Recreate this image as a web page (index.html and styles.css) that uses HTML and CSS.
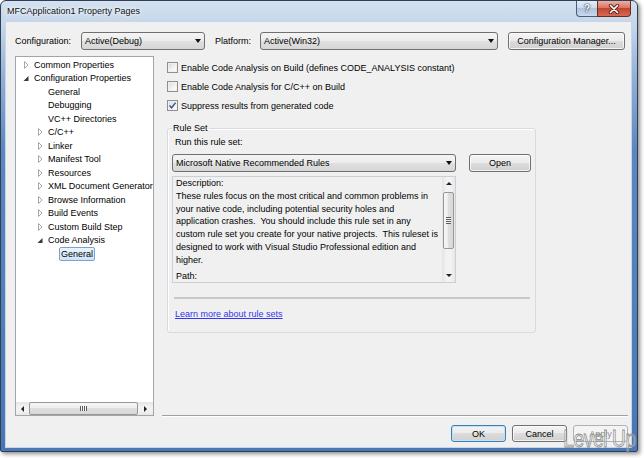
FILE: index.html
```html
<!DOCTYPE html>
<html lang="en">

<head>
    <meta charset="UTF-8">
    <title>MFCApplication1 Property Pages</title>
    <link rel="stylesheet" href="styles.css">
</head>

<body>
    <div class="window">
        <div class="titlebar">
            <span class="title">MFCApplication1 Property Pages</span>
            <div class="caption-buttons">
                <span class="cap-btn cap-help">?</span>
                <span class="cap-btn cap-close">
                    <svg width="12" height="10" viewBox="0 0 12 10">
                        <path d="M2.5 1.5 L9.5 8.5 M9.5 1.5 L2.5 8.5" stroke="#5a2118" stroke-width="3.4" stroke-linecap="round" />
                        <path d="M2.5 1.5 L9.5 8.5 M9.5 1.5 L2.5 8.5" stroke="#fff" stroke-width="1.7" stroke-linecap="round" />
                    </svg>
                </span>
            </div>
        </div>

        <div class="client">
            <div class="toolbar">
                <span class="tb-label">Configuration:</span>
                <div class="combo combo-config">Active(Debug)</div>
                <span class="tb-label platform-label">Platform:</span>
                <div class="combo combo-platform">Active(Win32)</div>
                <button class="btn btn-manager">Configuration Manager...</button>
            </div>

            <div class="main">
                <div class="tree">
                    <ul class="tree-items">
                        <li class="node lvl0"><span class="exp"><svg width="6" height="8" viewBox="0 0 6 8"><path d="M1.5 0.5 L5 4 L1.5 7.5 Z" fill="#fff" stroke="#a8a8a8" /></svg></span>Common Properties</li>
                        <li class="node lvl0"><span class="exp"><svg width="6" height="8" viewBox="0 0 6 8"><path d="M5.5 2 V7 H0.5 Z" fill="#3a3a3a" /></svg></span>Configuration Properties</li>
                        <li class="node lvl1"><span class="exp"></span>General</li>
                        <li class="node lvl1"><span class="exp"></span>Debugging</li>
                        <li class="node lvl1"><span class="exp"></span>VC++ Directories</li>
                        <li class="node lvl1"><span class="exp"><svg width="6" height="8" viewBox="0 0 6 8"><path d="M1.5 0.5 L5 4 L1.5 7.5 Z" fill="#fff" stroke="#a8a8a8" /></svg></span>C/C++</li>
                        <li class="node lvl1"><span class="exp"><svg width="6" height="8" viewBox="0 0 6 8"><path d="M1.5 0.5 L5 4 L1.5 7.5 Z" fill="#fff" stroke="#a8a8a8" /></svg></span>Linker</li>
                        <li class="node lvl1"><span class="exp"><svg width="6" height="8" viewBox="0 0 6 8"><path d="M1.5 0.5 L5 4 L1.5 7.5 Z" fill="#fff" stroke="#a8a8a8" /></svg></span>Manifest Tool</li>
                        <li class="node lvl1"><span class="exp"><svg width="6" height="8" viewBox="0 0 6 8"><path d="M1.5 0.5 L5 4 L1.5 7.5 Z" fill="#fff" stroke="#a8a8a8" /></svg></span>Resources</li>
                        <li class="node lvl1"><span class="exp"><svg width="6" height="8" viewBox="0 0 6 8"><path d="M1.5 0.5 L5 4 L1.5 7.5 Z" fill="#fff" stroke="#a8a8a8" /></svg></span>XML Document Generator</li>
                        <li class="node lvl1"><span class="exp"><svg width="6" height="8" viewBox="0 0 6 8"><path d="M1.5 0.5 L5 4 L1.5 7.5 Z" fill="#fff" stroke="#a8a8a8" /></svg></span>Browse Information</li>
                        <li class="node lvl1"><span class="exp"><svg width="6" height="8" viewBox="0 0 6 8"><path d="M1.5 0.5 L5 4 L1.5 7.5 Z" fill="#fff" stroke="#a8a8a8" /></svg></span>Build Events</li>
                        <li class="node lvl1"><span class="exp"><svg width="6" height="8" viewBox="0 0 6 8"><path d="M1.5 0.5 L5 4 L1.5 7.5 Z" fill="#fff" stroke="#a8a8a8" /></svg></span>Custom Build Step</li>
                        <li class="node lvl1"><span class="exp"><svg width="6" height="8" viewBox="0 0 6 8"><path d="M5.5 2 V7 H0.5 Z" fill="#3a3a3a" /></svg></span>Code Analysis</li>
                        <li class="node lvl2"><span class="exp"></span><span class="selected">General</span></li>
                    </ul>
                    <div class="hscroll">
                        <span class="sb-btn"><span class="tri-left"></span></span>
                        <span class="sb-thumb"><span class="grip-v"></span></span>
                        <span class="sb-btn sb-end"><span class="tri-right"></span></span>
                    </div>
                </div>

                <div class="page">
                    <div class="check-row">
                        <span class="checkbox"></span>
                        <span>Enable Code Analysis on Build (defines CODE_ANALYSIS constant)</span>
                    </div>
                    <div class="check-row">
                        <span class="checkbox"></span>
                        <span>Enable Code Analysis for C/C++ on Build</span>
                    </div>
                    <div class="check-row">
                        <span class="checkbox">
                            <svg width="9" height="9" viewBox="0 0 9 9"><path d="M1.5 4.5 L3.6 6.8 L7.6 1.6" fill="none" stroke="#3a5590" stroke-width="1.5" /></svg>
                        </span>
                        <span>Suppress results from generated code</span>
                    </div>

                    <fieldset class="ruleset">
                        <legend>Rule Set</legend>
                        <div class="run-label">Run this rule set:</div>
                        <div class="rule-row">
                            <div class="combo combo-rules">Microsoft Native Recommended Rules</div>
                            <button class="btn btn-open">Open</button>
                        </div>
                        <div class="desc">
                            <div class="desc-text">
                                <div>Description:</div>
                                <div>These rules focus on the most critical and common problems in</div>
                                <div>your native code, including potential security holes and</div>
                                <div>application crashes.&nbsp; You should include this rule set in any</div>
                                <div>custom rule set you create for your native projects.&nbsp; This ruleset is</div>
                                <div>designed to work with Visual Studio Professional edition and</div>
                                <div>higher.</div>
                                <div class="desc-path">Path:</div>
                            </div>
                            <div class="vscroll">
                                <span class="sb-btn-v"><span class="tri-up"></span></span>
                                <span class="sb-thumb-v"><span class="grip-h"></span></span>
                                <span class="sb-btn-v sb-end-v"><span class="tri-down"></span></span>
                            </div>
                        </div>
                        <div class="separator"></div>
                        <a class="link" href="#">Learn more about rule sets</a>
                    </fieldset>
                </div>
            </div>

            <div class="footer">
                <button class="btn btn-default">OK</button>
                <button class="btn">Cancel</button>
                <button class="btn" disabled>Apply</button>
            </div>
        </div>

        <div class="watermark">Level Up</div>
    </div>
</body>

</html>
```

FILE: styles.css
```css
* {
    box-sizing: border-box;
}

body {
    margin: 0;
    width: 644px;
    height: 458px;
    overflow: hidden;
    background: #fff;
    font-family: "Liberation Sans", Arial, sans-serif;
    font-size: 9px;
    color: #000;
}

/* window frame */

.window {
    position: relative;
    width: 638px;
    height: 452px;
    display: flex;
    flex-direction: column;
    padding: 0 6px 4px 5px;
    border: 1px solid #2f3f55;
    border-radius: 6px 6px 2px 2px;
    background: linear-gradient(180deg, #d3e1f0 0, #c3d5ea 26px, #97b4d9 70px, #5b86bf 150px, #4a77b4 100%);
    box-shadow: 2px 2px 4px rgba(0, 0, 0, 0.45);
}

.titlebar {
    height: 21px;
    display: flex;
    justify-content: space-between;
    align-items: flex-start;
}

.title {
    padding: 5px 0 0 1px;
    color: #111;
    text-shadow: 0 0 5px #fff, 0 0 3px #fff;
}

.caption-buttons {
    display: flex;
}

.cap-btn {
    height: 16px;
    display: flex;
    align-items: center;
    justify-content: center;
    border: 1px solid #4c5d76;
    border-top: 0;
}

.cap-help {
    width: 21px;
    border-radius: 0 0 0 4px;
    border-right: 0;
    background: linear-gradient(180deg, #e4ecf6 0, #cbd9ea 50%, #aec3de 50%, #c9d9ee 100%);
    color: #fff;
    font-weight: bold;
    font-size: 10px;
    text-shadow: 0 0 2px #1c2c44, 0 0 1px #1c2c44;
}

.cap-close {
    width: 34px;
    border-color: #6b2a22;
    border-radius: 0 0 4px 0;
    background: linear-gradient(180deg, #eab1a4 0, #d86e5a 50%, #c2452d 50%, #d76a56 100%);
}

/* dialog body */

.client {
    flex: 1;
    display: flex;
    flex-direction: column;
    padding: 10px 3px 0 9px;
    background: #f0f0f0;
    box-shadow: 0 0 0 1px #c7d5e6;
}

.toolbar {
    height: 18px;
    display: flex;
    align-items: center;
}

.tb-label {
    width: 66px;
}

.platform-label {
    width: 45px;
    margin-left: 10px;
}

.combo {
    height: 18px;
    display: flex;
    align-items: center;
    justify-content: space-between;
    padding: 0 3px 0 3px;
    border: 1px solid #707070;
    border-radius: 3px;
    background: linear-gradient(180deg, #f4f4f4 0, #ececec 50%, #e0e0e0 50%, #d6d6d6 100%);
    white-space: nowrap;
}

.combo::after {
    content: "";
    border-left: 3.5px solid transparent;
    border-right: 3.5px solid transparent;
    border-top: 4px solid #111;
}

.combo-config {
    width: 124px;
}

.combo-platform {
    width: 238px;
}

.btn {
    height: 18px;
    padding: 0;
    font: inherit;
    color: #000;
    border: 1px solid #707070;
    border-radius: 3px;
    background: linear-gradient(180deg, #f4f4f4 0, #ebebeb 50%, #dddddd 50%, #d0d0d0 100%);
    box-shadow: inset 0 0 0 1px rgba(255, 255, 255, 0.75);
}

.btn-manager {
    width: 117px;
    margin-left: 10px;
}

.main {
    height: 360px;
    margin-top: 6px;
    display: flex;
    gap: 8px;
}

/* tree */

.tree {
    width: 139px;
    display: flex;
    flex-direction: column;
    border: 1px solid #a0a6ae;
    background: #fff;
}

.tree-items {
    flex: 1;
    margin: 0;
    padding: 1px 0 0;
    list-style: none;
}

.node {
    height: 13.5px;
    display: flex;
    align-items: center;
    white-space: nowrap;
}

.lvl0 {
    padding-left: 6px;
}

.lvl1 {
    padding-left: 20px;
}

.lvl2 {
    padding-left: 34px;
}

.exp {
    width: 12px;
    flex: none;
    display: flex;
    align-items: center;
    padding-left: 1px;
}

.selected {
    margin-left: -3px;
    padding: 0 1px;
    line-height: 12px;
    border: 1px solid #7da2ce;
    border-radius: 2px;
    background: linear-gradient(180deg, #ebf3fd 0, #cfe2f9 100%);
}

.hscroll {
    height: 13px;
    display: flex;
    align-items: stretch;
    background: linear-gradient(180deg, #e4e4e4 0, #f2f2f2 35%, #f2f2f2 70%, #e6e6e6 100%);
}

.sb-btn {
    width: 13px;
    display: flex;
    align-items: center;
    justify-content: center;
}

.sb-end {
    flex: 1;
}

.sb-thumb {
    width: 109px;
    display: flex;
    align-items: center;
    justify-content: center;
    border: 1px solid #979797;
    border-radius: 2px;
    background: linear-gradient(180deg, #f6f6f6 0, #ececec 50%, #dedede 50%, #d8d8d8 100%);
}

.grip-v {
    width: 7px;
    height: 5px;
    background: repeating-linear-gradient(90deg, #5c5c5c 0 1px, #f4f4f4 1px 2px);
}

.tri-left {
    border-top: 3px solid transparent;
    border-bottom: 3px solid transparent;
    border-right: 3px solid #222;
}

.tri-right {
    border-top: 3px solid transparent;
    border-bottom: 3px solid transparent;
    border-left: 3px solid #222;
}

/* property page */

.page {
    flex: 1;
    padding: 2px 0 0 5px;
    border-bottom: 1px solid #a0a0a0;
    box-shadow: 0 1px 0 #fff;
}

.check-row {
    height: 19px;
    display: flex;
    align-items: center;
    gap: 3px;
}

.checkbox {
    width: 11px;
    height: 11px;
    display: flex;
    align-items: center;
    justify-content: center;
    border: 1px solid #8e8f8f;
    background: linear-gradient(135deg, #d8d8d8 0, #f4f4f4 60%, #fff 100%);
    box-shadow: inset 0 0 0 1px #f0f0f0;
}

.ruleset {
    width: 369px;
    margin: 7px 0 0;
    padding: 2px 4px 11px;
    border: 1px solid #d5dbe1;
    border-radius: 3px;
    box-shadow: inset 1px 1px 0 #fff;
}

.ruleset legend {
    padding: 0 1px;
    line-height: 12px;
}

.run-label {
    height: 13px;
    line-height: 13px;
    padding-left: 3px;
}

.rule-row {
    margin-top: 5px;
    display: flex;
}

.combo-rules {
    width: 284px;
}

.btn-open {
    width: 62px;
    margin-left: 13px;
}

.desc {
    width: 284px;
    height: 107px;
    margin-top: 4px;
    display: flex;
    border: 1px solid #c8d0d9;
}

.desc-text {
    flex: 1;
    padding-left: 3px;
    line-height: 12.8px;
    white-space: nowrap;
    overflow: hidden;
}

.desc-path {
    margin-top: 3px;
}

.vscroll {
    width: 13px;
    display: flex;
    flex-direction: column;
    align-items: stretch;
    background: linear-gradient(90deg, #e4e4e4 0, #f2f2f2 35%, #f2f2f2 70%, #e6e6e6 100%);
}

.sb-btn-v {
    height: 13px;
    display: flex;
    align-items: center;
    justify-content: center;
}

.sb-end-v {
    flex: 1;
    align-items: flex-end;
    padding-bottom: 5px;
}

.sb-thumb-v {
    height: 57px;
    margin: 2px 1px 0;
    display: flex;
    align-items: center;
    justify-content: center;
    border: 1px solid #979797;
    border-radius: 2px;
    background: linear-gradient(90deg, #f6f6f6 0, #ececec 50%, #dedede 50%, #d8d8d8 100%);
}

.grip-h {
    width: 5px;
    height: 7px;
    background: repeating-linear-gradient(180deg, #5c5c5c 0 1px, #f4f4f4 1px 2px);
}

.tri-up {
    border-left: 3px solid transparent;
    border-right: 3px solid transparent;
    border-bottom: 3px solid #222;
}

.tri-down {
    border-left: 3px solid transparent;
    border-right: 3px solid transparent;
    border-top: 3px solid #222;
}

.separator {
    width: 356px;
    height: 2px;
    margin: 14px 0 0 2px;
    background: #c9c9c9;
}

.link {
    display: block;
    margin-top: 9px;
    padding-left: 3px;
    line-height: 13px;
    color: #3535f2;
}

/* bottom buttons */

.footer {
    margin-top: 9px;
    display: flex;
    justify-content: flex-end;
    gap: 6px;
}

.footer .btn {
    width: 55px;
    height: 17px;
}

.footer .btn-default {
    border-color: #3c7fb1;
    box-shadow: inset 0 0 0 1px #bfe3f8;
}

.footer .btn:disabled {
    color: #8d8d8d;
    border-color: #adb2b5;
    background: #f4f4f4;
    box-shadow: none;
}

.watermark {
    position: absolute;
    right: 1px;
    bottom: 2px;
    font-size: 24px;
    line-height: 20px;
    letter-spacing: -0.5px;
    color: rgba(255, 255, 255, 0.35);
    -webkit-text-stroke: 0.8px #8a8a8a;
    transform: scaleX(0.8);
    transform-origin: right bottom;
}
```
